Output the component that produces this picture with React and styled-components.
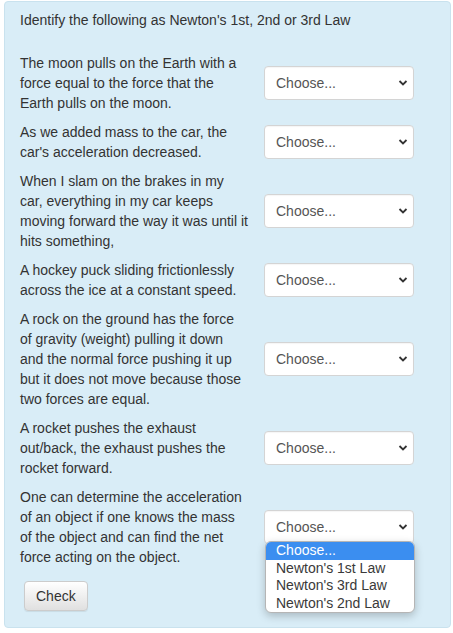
import React from "react";
import styled, { createGlobalStyle } from "styled-components";

const GlobalStyle = createGlobalStyle`
  body {
    margin: 0;
    background: #fff;
    font-family: "Liberation Sans", Arial, sans-serif;
    font-size: 14px;
    line-height: 20px;
    color: #333;
  }
`;

const questions = [
  "The moon pulls on the Earth with a force equal to the force that the Earth pulls on the moon.",
  "As we added mass to the car, the car's acceleration decreased.",
  "When I slam on the brakes in my car, everything in my car keeps moving forward the way it was until it hits something,",
  "A hockey puck sliding frictionlessly across the ice at a constant speed.",
  "A rock on the ground has the force of gravity (weight) pulling it down and the normal force pushing it up but it does not move because those two forces are equal.",
  "A rocket pushes the exhaust out/back, the exhaust pushes the rocket forward.",
  "One can determine the acceleration of an object if one knows the mass of the object and can find the net force acting on the object.",
];

const options = ["Choose...", "Newton's 1st Law", "Newton's 3rd Law", "Newton's 2nd Law"];

const Panel = styled.div`
  margin: 1px 2px 0 4px;
  padding: 8px 15px 16px 15px;
  background: #d9edf7;
  border: 1px solid #c9e2ee;
  border-radius: 4px;
`;

const Title = styled.div`
  margin-bottom: 23px;
`;

const Rows = styled.div`
  display: flex;
  flex-direction: column;
  row-gap: 9px;
`;

const Row = styled.div`
  display: grid;
  grid-template-columns: 229px 150px;
  column-gap: 15px;
  align-items: center;
`;

const Question = styled.div``;

const SelectBox = styled.div`
  position: relative;
  display: flex;
  align-items: center;
  justify-content: space-between;
  height: 34px;
  box-sizing: border-box;
  padding: 0 5px 0 11px;
  background: #fff;
  border: 1px solid #d4d4d4;
  border-radius: 4px;
  color: #555;
  box-shadow: inset 0 1px 1px rgba(0, 0, 0, 0.04);
`;

const Chevron = styled.svg`
  width: 10px;
  height: 8px;
`;

const Menu = styled.div`
  position: absolute;
  top: calc(100% - 2px);
  left: 0;
  width: 150px;
  box-sizing: border-box;
  background: #fff;
  border: 1px solid #b5b5b5;
  border-radius: 6px;
  box-shadow: 0 3px 8px rgba(0, 0, 0, 0.22);
  overflow: hidden;
  z-index: 2;
`;

const MenuItem = styled.div`
  height: 17.5px;
  line-height: 17px;
  padding-left: 10px;
  color: ${(p) => (p.$active ? "#fff" : "#3a3a3a")};
  background: ${(p) => (p.$active ? "#3b8ef0" : "transparent")};
`;

const CheckButton = styled.button`
  margin: 14px 0 0 4px;
  padding: 5px 11px;
  font-family: inherit;
  font-size: 14px;
  line-height: 18px;
  color: #333;
  background: linear-gradient(to bottom, #ffffff 0%, #e0e0e0 100%);
  border: 1px solid #cccccc;
  border-radius: 4px;
  box-shadow: 0 1px 0 rgba(255, 255, 255, 0.15) inset, 0 1px 1px rgba(0, 0, 0, 0.075);
`;

const Select = ({ open }) => (
  <SelectBox>
    <span>Choose...</span>
    <Chevron viewBox="0 0 10 8">
      <path d="M1.5 2 L5 5.5 L8.5 2" fill="none" stroke="#333" strokeWidth="1.8" />
    </Chevron>
    {open && (
      <Menu>
        {options.map((o, i) => (
          <MenuItem key={o} $active={i === 0}>
            {o}
          </MenuItem>
        ))}
      </Menu>
    )}
  </SelectBox>
);

export default function App() {
  return (
    <>
      <GlobalStyle />
      <Panel>
        <Title>Identify the following as Newton's 1st, 2nd or 3rd Law</Title>
        <Rows>
          {questions.map((q, i) => (
            <Row key={i}>
              <Question>{q}</Question>
              <Select open={i === questions.length - 1} />
            </Row>
          ))}
        </Rows>
        <CheckButton>Check</CheckButton>
      </Panel>
    </>
  );
}
